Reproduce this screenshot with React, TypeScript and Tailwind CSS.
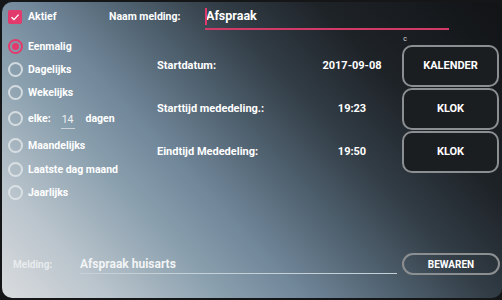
import { useState } from 'react';

const opties = [
  'Eenmalig',
  'Dagelijks',
  'Wekelijks',
  'elke',
  'Maandelijks',
  'Laatste dag maand',
  'Jaarlijks',
];

const rijen = [
  { label: 'Startdatum:', waarde: '2017-09-08', knop: 'KALENDER' },
  { label: 'Starttijd mededeling.:', waarde: '19:23', knop: 'KLOK' },
  { label: 'Eindtijd Mededeling:', waarde: '19:50', knop: 'KLOK' },
];

function Radio({ checked }: { checked: boolean }) {
  return (
    <span
      className={
        checked
          ? 'flex h-[15px] w-[15px] shrink-0 items-center justify-center rounded-full border-2 border-[#e23a6c]'
          : 'flex h-[15px] w-[15px] shrink-0 items-center justify-center rounded-full border-2 border-[#e4e8eb]/80'
      }
    >
      {checked && <span className="h-[7px] w-[7px] rounded-full bg-[#e23a6c]" />}
    </span>
  );
}

export default function App() {
  const [keuze] = useState(0);

  return (
    <div className="h-[300px] w-[502px] overflow-hidden bg-[#141618] pl-[2px] pt-[2px] font-['Roboto',sans-serif] text-white">
      <div className="flex h-[296px] w-[500px] flex-col rounded-[10px] bg-[linear-gradient(47deg,#dadcde_0%,#b9c4cc_14%,#8ca1af_28%,#71879a_39%,#506270_51%,#323d46_63%,#1e2328_76%,#111315_100%)]">
        {/* Bovenste rij */}
        <div className="flex h-[30px] items-center pl-[6px]">
          <span className="flex h-[14px] w-[14px] items-center justify-center rounded-[2px] bg-[#e23a6c]">
            <svg width="10" height="10" viewBox="0 0 10 10" fill="none">
              <path d="M1.5 5.2 L4 7.6 L8.6 2.6" stroke="white" strokeWidth="1.4" />
            </svg>
          </span>
          <span className="ml-[6px] w-[81px] text-[10.5px] font-bold">Aktief</span>
          <span className="w-[96px] text-[10.5px] font-bold">Naam melding:</span>
          <div className="relative flex h-[25px] w-[244px] items-center border-b-2 border-[#d23a68]">
            <span className="absolute left-0 top-[3px] h-[17px] w-[1.5px] bg-[#e23a6c]" />
            <span className="pl-[1px] text-[12.5px] font-bold">Afspraak</span>
          </div>
        </div>

        {/* Midden */}
        <div className="flex pt-[3px]">
          <div className="flex w-[155px] flex-col pl-[6px] text-[10.5px] font-bold">
            {opties.map((o, i) => (
              <div
                key={o}
                className={
                  i === 3
                    ? 'flex h-[29px] items-center gap-[5px]'
                    : i === 4
                      ? 'flex h-[25px] items-center gap-[5px]'
                      : 'flex h-[23px] items-center gap-[5px]'
                }
              >
                <Radio checked={i === keuze} />
                {i === 3 ? (
                  <>
                    <span>elke:</span>
                    <span className="ml-[5px] flex h-[20px] w-[14px] items-start justify-center border-b border-[#c9d2d8] pt-[3px] font-normal text-[#eef1f3]">
                      14
                    </span>
                    <span className="ml-[6px]">dagen</span>
                  </>
                ) : (
                  <span>{o}</span>
                )}
              </div>
            ))}
          </div>

          <div className="flex flex-col">
            <div className="flex h-[10px] justify-end pr-[92px]">
              <span className="text-[7px] leading-[8px] text-[#d8dcdf]">c</span>
            </div>
            <div className="flex flex-col gap-[1px]">
              {rijen.map((r) => (
                <div key={r.label} className="flex h-[42px] items-center text-[11px] font-bold">
                  <span className="w-[156px]">{r.label}</span>
                  <span className="w-[78px] text-center">{r.waarde}</span>
                  <button className="ml-[11px] flex h-[42px] w-[97px] items-center justify-center rounded-[10px] border-2 border-[#8c8f91] bg-[#1b1e21] text-[11px] font-bold">
                    {r.knop}
                  </button>
                </div>
              ))}
            </div>
          </div>
        </div>

        {/* Onderste rij */}
        <div className="mt-auto mb-[23px] flex items-center">
          <span className="w-[78px] pl-[11px] text-[10px] font-bold text-[#eef1f3]/85">Melding:</span>
          <div className="flex h-[20px] w-[317px] items-center border-b border-[#c6d0d7] text-[12px] font-bold text-[#f2f4f5]">
            Afspraak huisarts
          </div>
          <button className="ml-[5px] flex h-[22px] w-[98px] items-center justify-center rounded-[11px] border-2 border-[#8c8f91] text-[10px] font-bold">
            BEWAREN
          </button>
        </div>
      </div>
    </div>
  );
}
